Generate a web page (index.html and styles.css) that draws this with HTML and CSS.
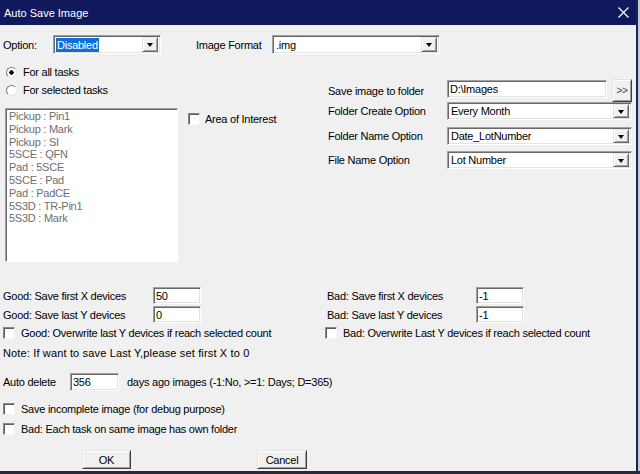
FILE: index.html
```html
<!DOCTYPE html>
<html>
<head>
<meta charset="utf-8">
<link rel="stylesheet" href="styles.css">
</head>
<body>
<div class="window">
  <div class="titlebar">
    <span class="title">Auto Save Image</span>
    <svg class="close" width="11" height="11" viewBox="0 0 11 11"><path d="M0.5 0.5 L10.5 10.5 M10.5 0.5 L0.5 10.5" stroke="#fff" stroke-width="1.3" fill="none"/></svg>
  </div>
  <div class="client">
    <div class="toprow">
      <span class="lbl l-option">Option:</span>
      <div class="combo c-option"><span class="sel">Disabled</span><span class="dd"><i></i></span></div>
      <span class="lbl l-format">Image Format</span>
      <div class="combo c-format"><span class="val">.img</span><span class="dd"><i></i></span></div>
    </div>

    <div class="main">
      <div class="left">
        <div class="radio-row"><span class="radio on"></span><span>For all tasks</span></div>
        <div class="radio-row"><span class="radio"></span><span>For selected tasks</span></div>
        <div class="list-area">
          <div class="listbox">
            <div>Pickup : Pin1</div>
            <div>Pickup : Mark</div>
            <div>Pickup : SI</div>
            <div>5SCE : QFN</div>
            <div>Pad : 5SCE</div>
            <div>5SCE : Pad</div>
            <div>Pad : PadCE</div>
            <div>5S3D : TR-Pin1</div>
            <div>5S3D : Mark</div>
          </div>
          <div class="check aoi"><span class="box"></span><span>Area of Interest</span></div>
        </div>
      </div>
      <div class="right">
        <div class="frow r1"><span class="flabel">Save image to folder</span><div class="textbox tb-folder">D:\Images</div><div class="btn small">&gt;&gt;</div></div>
        <div class="frow r2"><span class="flabel">Folder Create Option</span><div class="combo c-wide"><span class="val">Every Month</span><span class="dd"><i></i></span></div></div>
        <div class="frow r3"><span class="flabel">Folder Name Option</span><div class="combo c-wide"><span class="val">Date_LotNumber</span><span class="dd"><i></i></span></div></div>
        <div class="frow r4"><span class="flabel">File Name Option</span><div class="combo c-wide"><span class="val">Lot Number</span><span class="dd"><i></i></span></div></div>
      </div>
    </div>

    <div class="counts">
      <div class="col good">
        <div class="crow"><span class="clabel">Good: Save first X devices</span><div class="textbox num">50</div></div>
        <div class="crow second"><span class="clabel">Good: Save last Y devices</span><div class="textbox num">0</div></div>
        <div class="check crow-check"><span class="box"></span><span>Good: Overwrite last Y devices if reach selected count</span></div>
      </div>
      <div class="col bad">
        <div class="crow"><span class="clabel">Bad: Save first X devices</span><div class="textbox num">-1</div></div>
        <div class="crow second"><span class="clabel">Bad: Save last Y devices</span><div class="textbox num">-1</div></div>
        <div class="check crow-check"><span class="box"></span><span>Bad: Overwrite Last Y devices if reach selected count</span></div>
      </div>
    </div>

    <div class="note">Note: If want to save Last Y,please set first X to 0</div>

    <div class="autorow">
      <span class="alabel">Auto delete</span>
      <div class="textbox days">356</div>
      <span class="ahint">days ago images (-1:No, &gt;=1: Days; D=365)</span>
    </div>

    <div class="check opt o1"><span class="box"></span><span>Save incomplete image (for debug purpose)</span></div>
    <div class="check opt o2"><span class="box"></span><span>Bad: Each task on same image has own folder</span></div>

    <div class="buttons">
      <div class="btn ok">OK</div>
      <div class="btn cancel">Cancel</div>
    </div>
  </div>
</div>
<div class="bottom-edge"></div>
</body>
</html>
```

FILE: styles.css
```css
* { box-sizing: border-box; margin: 0; padding: 0; }
html, body { width: 640px; height: 474px; overflow: hidden; }
body {
  background: #c9cbd2;
  font-family: "Liberation Sans", Arial, sans-serif;
  font-size: 11px;
  letter-spacing: -0.25px;
  color: #000;
}
.window {
  width: 638px;
  height: 471px;
  background: #f0f0f0;
  border-right: 2px solid #1a2560;
}
.titlebar {
  height: 25px;
  background: #10195c;
  color: #fff;
  display: flex;
  align-items: center;
  justify-content: space-between;
  padding-left: 4px;
  padding-right: 7px;
}
.title { font-size: 11px; letter-spacing: 0; }
.close { display: block; }

/* generic controls */
.combo, .textbox, .listbox {
  background: #fff;
  border: 1px solid;
  border-color: #a0a0a0 #fff #fff #a0a0a0;
  box-shadow: inset 1px 1px 0 #696969, inset -1px -1px 0 #e3e3e3;
}
.combo {
  height: 19px;
  display: flex;
  align-items: center;
  padding: 2px;
}
.combo .val { flex: 1; padding-left: 1px; white-space: nowrap; }
.combo .sel {
  background: #0f6fd4;
  color: #fff;
  height: 14px;
  line-height: 14px;
  padding: 0 1px;
  margin-top: 1px;
}
.combo .sel + .dd { margin-left: auto; }
.dd {
  width: 16px;
  height: 15px;
  background: #f0f0f0;
  border: 1px solid;
  border-color: #e3e3e3 #696969 #696969 #e3e3e3;
  box-shadow: inset 1px 1px 0 #fff, inset -1px -1px 0 #a0a0a0;
  display: flex;
  align-items: center;
  justify-content: center;
  flex: none;
}
.dd i {
  display: block;
  width: 0; height: 0;
  border-left: 3.5px solid transparent;
  border-right: 3.5px solid transparent;
  border-top: 4px solid #000;
  margin-top: 1px;
}
.textbox {
  height: 18px;
  line-height: 15px;
  padding: 1px 2px 0;
  white-space: nowrap;
}
.btn {
  background: #f0f0f0;
  border: 1px solid;
  border-color: #e3e3e3 #404040 #404040 #e3e3e3;
  box-shadow: inset 1px 1px 0 #fff, inset -1px -1px 0 #a0a0a0;
  display: flex;
  align-items: center;
  justify-content: center;
}
.box {
  width: 12px; height: 12px;
  background: #fff;
  border: 1px solid;
  border-color: #8a8a8a #f4f4f4 #f4f4f4 #8a8a8a;
  box-shadow: inset 1px 1px 0 #5a5a5a;
  flex: none;
}
.check { display: flex; align-items: center; }
.check .box { margin-right: 6px; }

/* top row */
.toprow {
  display: flex;
  align-items: center;
  margin-top: 10px;
  height: 19px;
  padding-left: 3px;
}
.l-option { width: 50px; }
.c-option { width: 108px; }
.l-format { margin-left: 35px; width: 76px; }
.c-format { width: 168px; }

/* main */
.main { display: flex; margin-top: 9px; }
.left { width: 328px; flex: none; }
.radio-row { display: flex; align-items: center; height: 18px; padding-left: 6px; }
.radio {
  width: 11px; height: 11px;
  border-radius: 50%;
  background: #fff;
  border: 1px solid;
  border-color: #7a7a7a #e8e8e8 #e8e8e8 #7a7a7a;
  margin-right: 6px;
  flex: none;
}
.radio.on { background: radial-gradient(circle, #000 0 2px, #fff 2.4px); }
.list-area { display: flex; align-items: flex-start; margin-top: 9px; }
.listbox {
  margin-left: 5px;
  width: 173px;
  height: 154px;
  box-shadow: inset 1px 1px 0 #696969;
  padding: 1px 0 0 3px;
  color: #6e6e6e;
  line-height: 12.8px;
}
.aoi { margin-left: 10px; margin-top: 5px; height: 12px; }
.aoi .box { margin-right: 5px; }

.right { width: 304px; padding-top: 16px; }
.frow { display: flex; align-items: center; }
.flabel { width: 119px; flex: none; }
.r1 { height: 23px; }
.tb-folder { width: 160px; margin-top: -3px; }
.btn.small { width: 20px; height: 23px; margin-left: 5px; font-size: 10px; color: #444; }
.r2 { height: 18px; }
.r3 { margin-top: 7px; height: 18px; }
.r4 { margin-top: 6px; height: 18px; }
.c-wide { width: 186px; height: 18px; }
.c-wide .dd { height: 14px; }

/* counts */
.counts { display: flex; margin-top: 25px; }
.col.good { width: 325px; padding-left: 3px; }
.col.bad { width: 300px; }
.crow { display: flex; align-items: center; height: 17px; }
.crow.second { margin-top: 2px; }
.clabel { width: 150px; flex: none; }
.bad .crow { padding-left: 2px; }
.bad .clabel { width: 149px; }
.textbox.num { width: 48px; height: 17px; }
.crow-check { margin-top: 3px; height: 14px; }

.note { margin-top: 6px; height: 14px; line-height: 14px; padding-left: 3px; letter-spacing: 0.15px; }

.autorow { display: flex; align-items: center; margin-top: 13px; height: 18px; padding-left: 3px; }
.alabel { width: 67px; flex: none; }
.textbox.days { width: 49px; }
.ahint { margin-left: 8px; }

.opt { padding-left: 3px; height: 14px; }
.o1 { margin-top: 11px; }
.o2 { margin-top: 6px; }

.buttons { display: flex; margin-top: 14px; }
.btn.ok { margin-left: 82px; width: 49px; height: 19px; }
.btn.cancel { margin-left: 126px; width: 50px; height: 19px; }

.bottom-edge { height: 3px; background: #252a3a; }
```
